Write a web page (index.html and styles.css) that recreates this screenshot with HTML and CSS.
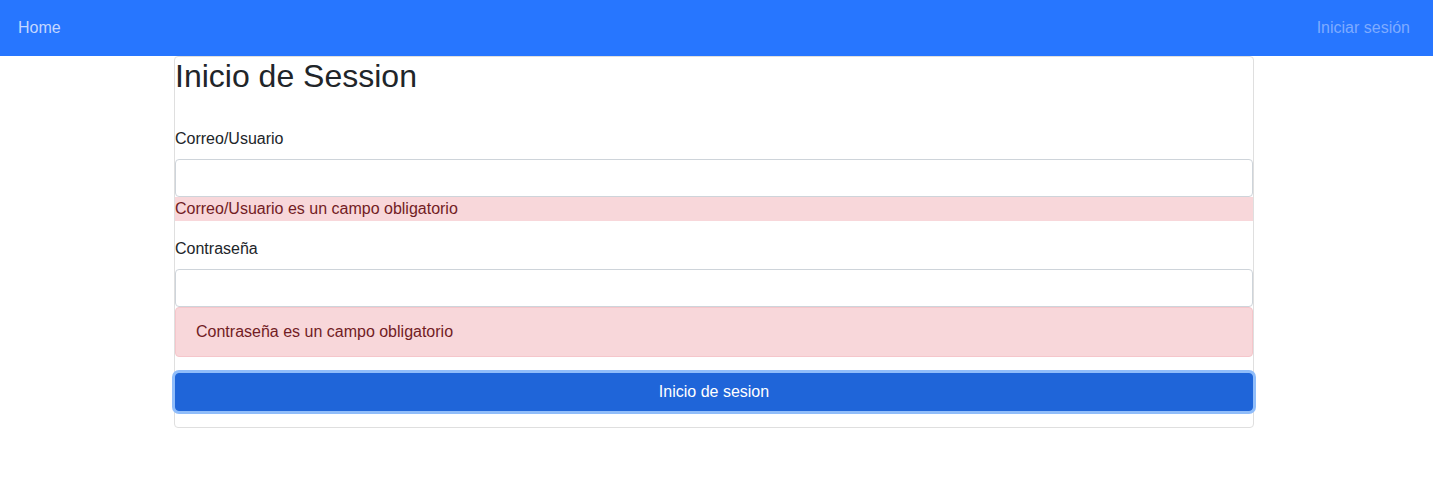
FILE: index.html
```html
<!DOCTYPE html>
<html lang="es">
<head>
<meta charset="utf-8">
<title>Inicio de Session</title>
<link rel="stylesheet" href="styles.css">
</head>
<body>
<nav class="navbar">
  <a class="nav-link home" href="#">Home</a>
  <a class="nav-link login" href="#">Iniciar sesión</a>
</nav>
<main class="card">
  <h2 class="title">Inicio de Session</h2>
  <form class="form">
    <div class="group">
      <label class="label">Correo/Usuario</label>
      <input class="input" type="text">
      <div class="error-band">Correo/Usuario es un campo obligatorio</div>
    </div>
    <div class="group">
      <label class="label">Contraseña</label>
      <input class="input" type="password">
      <div class="alert">Contraseña es un campo obligatorio</div>
    </div>
    <button class="btn" type="button">Inicio de sesion</button>
  </form>
</main>
</body>
</html>
```

FILE: styles.css
```css
* { box-sizing: border-box; }
html, body {
  margin: 0;
  padding: 0;
  background: #fff;
  font-family: "Liberation Sans", Arial, sans-serif;
  font-size: 16px;
  line-height: 1.5;
  color: #212529;
}
.navbar {
  height: 56px;
  background: #2776ff;
  display: flex;
  align-items: center;
  justify-content: space-between;
  padding: 0 23px 0 18px;
}
.nav-link {
  text-decoration: none;
  font-size: 16px;
}
.home { color: #c4d7ff; }
.login { color: #7eabff; }
.card {
  width: 1080px;
  margin: 0 0 0 174px;
  border: 1px solid #dfdfdf;
  border-radius: 4px;
  padding-bottom: 16px;
}
.title {
  margin: 0 0 32px;
  font-size: 32px;
  font-weight: 400;
  line-height: 1.2;
  height: 38px;
}
.form { display: flex; flex-direction: column; }
.group { margin-bottom: 16px; display: flex; flex-direction: column; }
.label { display: block; margin-bottom: 8px; line-height: 24px; }
.input {
  display: block;
  width: 100%;
  height: 38px;
  border: 1px solid #ced4da;
  border-radius: 4px;
  padding: 6px 12px;
  font: inherit;
}
.error-band {
  background: #f8d7da;
  color: #721c24;
  line-height: 24px;
}
.alert {
  background: #f8d7da;
  color: #721c24;
  border: 1px solid #f5c6cb;
  border-radius: 4px;
  padding: 12px 20px;
  line-height: 24px;
}
.btn {
  display: block;
  width: 100%;
  height: 38px;
  background: #1f65d9;
  color: #fff;
  border: 1px solid #1f65d9;
  border-radius: 4px;
  font: inherit;
  box-shadow: 0 0 0 3px #90bdfa;
}
```
